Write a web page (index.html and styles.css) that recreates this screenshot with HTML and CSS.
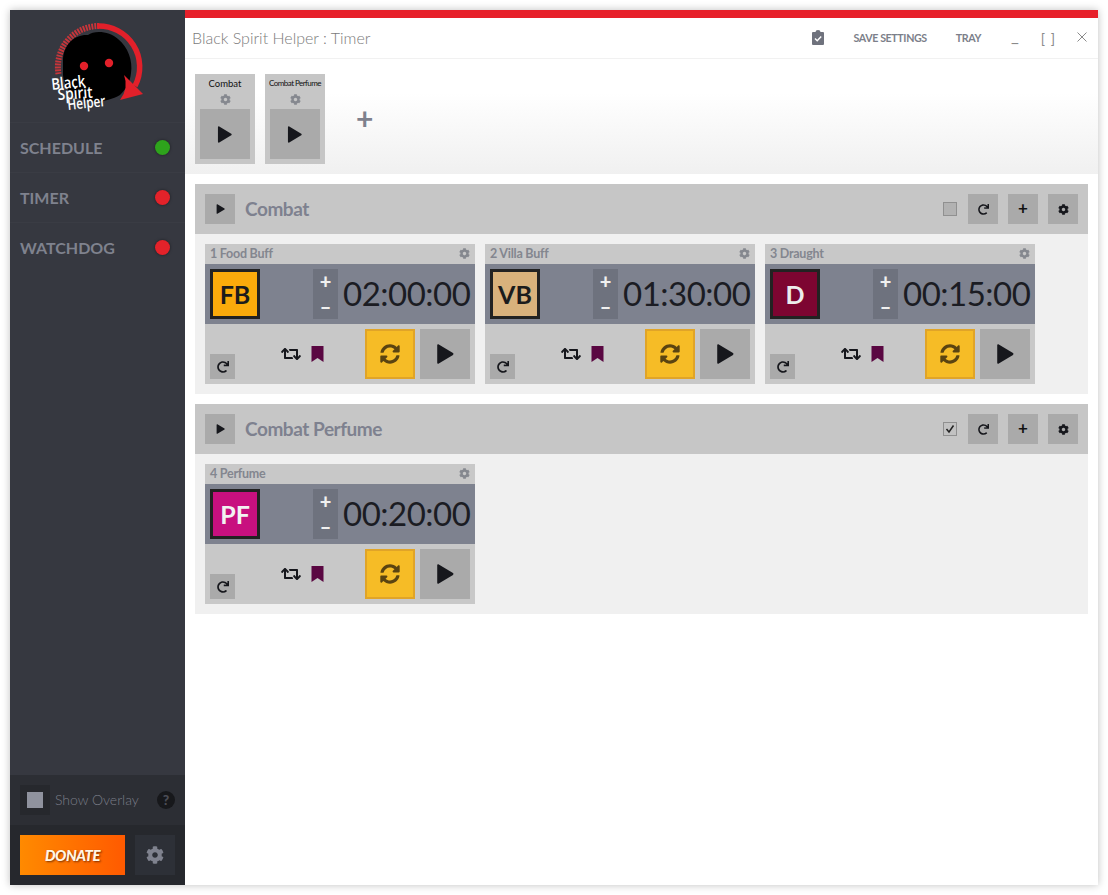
FILE: index.html
```html
<!DOCTYPE html>
<html lang="en">
<head>
  <meta charset="UTF-8">
  <title>Black Spirit Helper : Timer</title>
  <link rel="stylesheet" href="styles.css">
</head>
<body>
<svg class="defs" width="0" height="0">
  <symbol id="i-cog" viewBox="0 0 512 512"><path d="M487.4 315.7l-42.6-24.6c4.3-23.2 4.3-47 0-70.2l42.6-24.6c4.9-2.8 7.1-8.6 5.5-14-11.1-35.6-30-67.8-54.7-94.6-3.8-4.1-10-5.1-14.8-2.3L380.8 110c-17.9-15.4-38.5-27.3-60.8-35.1V25.8c0-5.6-3.9-10.5-9.4-11.7-36.7-8.2-74.3-7.8-109.2 0-5.5 1.2-9.4 6.1-9.4 11.7V75c-22.2 7.9-42.8 19.8-60.8 35.1L88.7 85.5c-4.9-2.8-11-1.9-14.8 2.3-24.7 26.7-43.6 58.9-54.7 94.6-1.7 5.4.6 11.2 5.5 14L67.3 221c-4.3 23.2-4.3 47 0 70.2l-42.6 24.6c-4.9 2.8-7.1 8.6-5.5 14 11.1 35.6 30 67.8 54.7 94.6 3.8 4.1 10 5.1 14.8 2.3l42.6-24.6c17.9 15.4 38.5 27.3 60.8 35.1v49.2c0 5.6 3.9 10.5 9.4 11.7 36.7 8.2 74.3 7.8 109.2 0 5.5-1.2 9.4-6.1 9.4-11.7v-49.2c22.2-7.9 42.8-19.8 60.8-35.1l42.6 24.6c4.9 2.8 11 1.9 14.8-2.3 24.7-26.7 43.6-58.9 54.7-94.6 1.5-5.5-.7-11.3-5.6-14.1zM256 336c-44.1 0-80-35.9-80-80s35.9-80 80-80 80 35.9 80 80-35.9 80-80 80z"/></symbol>
  <symbol id="i-redo" viewBox="0 0 512 512"><path d="M500.33 0h-47.41a12 12 0 0 0-12 12.57l4 82.76A247.42 247.42 0 0 0 256 8C119.34 8 7.9 119.53 8 256.19 8.1 393.07 119.1 504 256 504a247.1 247.1 0 0 0 166.18-63.91 12 12 0 0 0 .48-17.43l-34-34a12 12 0 0 0-16.38-.55A176 176 0 1 1 402.1 157.8l-101.53-4.87a12 12 0 0 0-12.57 12v47.41a12 12 0 0 0 12 12h200.33a12 12 0 0 0 12-12V12a12 12 0 0 0-12-12z"/></symbol>
  <symbol id="i-sync" viewBox="0 0 512 512"><path d="M370.72 133.28C339.458 104.008 298.888 87.962 255.848 88c-77.458.068-144.328 53.178-162.791 126.85-1.344 5.363-6.122 9.15-11.651 9.15H24.103c-7.498 0-13.194-6.807-11.807-14.176C33.933 94.924 134.813 8 256 8c66.448 0 126.791 26.136 171.315 68.685L463.03 40.97C478.149 25.851 504 36.559 504 57.941V192c0 13.255-10.745 24-24 24H345.941c-21.382 0-32.09-25.851-16.971-40.971l41.75-41.749zM32 296h134.059c21.382 0 32.09 25.851 16.971 40.971l-41.75 41.75c31.262 29.273 71.835 45.319 114.876 45.28 77.418-.07 144.315-53.144 162.787-126.849 1.344-5.363 6.122-9.15 11.651-9.15h57.304c7.498 0 13.194 6.807 11.807 14.176C478.067 417.076 377.187 504 256 504c-66.448 0-126.791-26.136-171.315-68.685L48.97 471.03C33.851 486.149 8 475.441 8 454.059V320c0-13.255 10.745-24 24-24z"/></symbol>
  <symbol id="i-retweet" viewBox="0 0 640 512"><path d="M629.657 343.598L528.971 444.284c-9.373 9.372-24.568 9.372-33.941 0L394.343 343.598c-9.373-9.373-9.373-24.569 0-33.941l10.823-10.823c9.562-9.562 25.133-9.34 34.419.492L480 342.118V160H292.451a24.005 24.005 0 0 1-16.971-7.029l-16-16C244.361 121.851 255.069 96 276.451 96H520c13.255 0 24 10.745 24 24v222.118l40.416-43.792c9.285-9.831 24.856-10.054 34.419-.492l10.823 10.823c9.372 9.372 9.372 24.569-.001 33.941zm-265.138 15.431A23.999 23.999 0 0 0 347.548 352H160V169.881l40.416 43.792c9.286 9.831 24.856 10.054 34.419.491l10.822-10.822c9.373-9.373 9.373-24.569 0-33.941L144.971 67.716c-9.373-9.373-24.569-9.373-33.941 0L10.343 168.402c-9.373 9.373-9.373 24.569 0 33.941l10.822 10.822c9.562 9.562 25.133 9.34 34.419-.491L96 169.881V392c0 13.255 10.745 24 24 24h243.549c21.382 0 32.09-25.851 16.971-40.971l-16.001-16z"/></symbol>
  <symbol id="i-play" viewBox="0 0 16 18"><path d="M1 1.2v15.6c0 .8.8 1.2 1.4.8l12.8-7.8c.6-.4.6-1.2 0-1.6L2.4.4C1.8 0 1 .4 1 1.2z"/></symbol>
  <symbol id="i-bookmark" viewBox="0 0 12 16"><path d="M0 0h12v16L6 12 0 16z"/></symbol>
</svg>

<div class="window">
  <aside class="sidebar">
    <div class="logo">
      <svg width="110" height="100" viewBox="0 0 110 100">
        <path d="M59 11 A41 41 0 0 0 18.5 59" fill="none" stroke="#c8353a" stroke-width="6" stroke-dasharray="1.8 1.1"/>
        <path d="M57 11 A41 41 0 0 1 95 71" fill="none" stroke="#e2202a" stroke-width="5.5"/>
        <path d="M23 44 C24 28 36 19 48 20 C54 15 70 16 78 24 C88 32 93 46 91 58 C90 68 86 74 80 80 C70 86 56 88 44 85 C32 84 24 72 23 60z" fill="#000"/>
        <circle cx="44" cy="51" r="4.2" fill="#e2202a"/>
        <circle cx="69" cy="48" r="4.2" fill="#e2202a"/>
        <path d="M84 60 L103 79 L80 85 Q89 73 84 60z" fill="#e2202a"/>
        <g class="logo-text">
          <text x="12" y="75" transform="rotate(-6 12 75)" font-size="16" textLength="34" lengthAdjust="spacingAndGlyphs">Black</text>
          <text x="18" y="85" transform="rotate(-4 18 85)" font-size="16" textLength="35" lengthAdjust="spacingAndGlyphs">Spirit</text>
          <text x="28" y="95" transform="rotate(-6 28 95)" font-size="15" textLength="38" lengthAdjust="spacingAndGlyphs">Helper</text>
        </g>
      </svg>
    </div>
    <nav class="nav">
      <a class="nav-item"><span>SCHEDULE</span><i class="dot dot-green"></i></a>
      <a class="nav-item"><span>TIMER</span><i class="dot dot-red"></i></a>
      <a class="nav-item"><span>WATCHDOG</span><i class="dot dot-red"></i></a>
    </nav>
    <div class="overlay-row">
      <span class="overlay-check"><i></i></span>
      <span class="overlay-label">Show Overlay</span>
      <span class="help">?</span>
    </div>
    <div class="donate-row">
      <button class="donate">DONATE</button>
      <button class="side-settings"><svg width="18" height="18"><use href="#i-cog"/></svg></button>
    </div>
  </aside>

  <main class="main">
    <div class="redbar"></div>
    <header class="titlebar">
      <span class="app-title">Black Spirit Helper : Timer</span>
      <svg class="clip" width="12" height="15" viewBox="0 0 12 15"><path d="M1 2h2.5a2.5 2 0 0 1 5 0H11a1 1 0 0 1 1 1v11a1 1 0 0 1-1 1H1a1 1 0 0 1-1-1V3a1 1 0 0 1 1-1z" fill="#6f727d"/><path d="M3 8.5l2.2 2.2L9.2 6.6" fill="none" stroke="#fff" stroke-width="1.5"/></svg>
      <span class="bar-link save">SAVE SETTINGS</span>
      <span class="bar-link tray">TRAY</span>
      <span class="win-btn min">_</span>
      <span class="win-btn max">[ ]</span>
      <svg class="win-close" width="10" height="10" viewBox="0 0 10 10"><path d="M.5.5l9 9M9.5.5l-9 9" stroke="#8a8a8a" stroke-width="1" fill="none"/></svg>
    </header>

    <section class="toolbar">
      <div class="tile">
        <div class="tile-name">Combat</div>
        <svg class="tile-cog" width="11" height="11"><use href="#i-cog"/></svg>
        <div class="tile-play"><svg width="15" height="17"><use href="#i-play"/></svg></div>
      </div>
      <div class="tile">
        <div class="tile-name small">Combat Perfume</div>
        <svg class="tile-cog" width="11" height="11"><use href="#i-cog"/></svg>
        <div class="tile-play"><svg width="15" height="17"><use href="#i-play"/></svg></div>
      </div>
      <div class="add-group">+</div>
    </section>

    <div class="content">
      <section class="group">
        <div class="group-head">
          <button class="sq"><svg width="9" height="10"><use href="#i-play"/></svg></button>
          <h3 class="group-title">Combat</h3>
          <span class="check"></span>
          <button class="sq"><svg width="11" height="11"><use href="#i-redo"/></svg></button>
          <button class="sq plus">+</button>
          <button class="sq"><svg width="11" height="11"><use href="#i-cog"/></svg></button>
        </div>
        <div class="group-body">
          <div class="card">
            <div class="card-title"><span>1 Food Buff</span><svg width="11" height="11"><use href="#i-cog"/></svg></div>
            <div class="card-main">
              <div class="badge badge-fb">FB</div>
              <div class="stepper"><span>+</span><span>–</span></div>
              <div class="time">02:00:00</div>
            </div>
            <div class="card-foot">
              <button class="mini"><svg width="12" height="12"><use href="#i-redo"/></svg></button>
              <div class="flags">
                <svg class="rt" width="20" height="16"><use href="#i-retweet"/></svg>
                <svg class="bm" width="13" height="16"><use href="#i-bookmark"/></svg>
              </div>
              <button class="loop"><svg width="20" height="20"><use href="#i-sync"/></svg></button>
              <button class="go"><svg width="18" height="20"><use href="#i-play"/></svg></button>
            </div>
          </div>
          <div class="card">
            <div class="card-title"><span>2 Villa Buff</span><svg width="11" height="11"><use href="#i-cog"/></svg></div>
            <div class="card-main">
              <div class="badge badge-vb">VB</div>
              <div class="stepper"><span>+</span><span>–</span></div>
              <div class="time">01:30:00</div>
            </div>
            <div class="card-foot">
              <button class="mini"><svg width="12" height="12"><use href="#i-redo"/></svg></button>
              <div class="flags">
                <svg class="rt" width="20" height="16"><use href="#i-retweet"/></svg>
                <svg class="bm" width="13" height="16"><use href="#i-bookmark"/></svg>
              </div>
              <button class="loop"><svg width="20" height="20"><use href="#i-sync"/></svg></button>
              <button class="go"><svg width="18" height="20"><use href="#i-play"/></svg></button>
            </div>
          </div>
          <div class="card">
            <div class="card-title"><span>3 Draught</span><svg width="11" height="11"><use href="#i-cog"/></svg></div>
            <div class="card-main">
              <div class="badge badge-d">D</div>
              <div class="stepper"><span>+</span><span>–</span></div>
              <div class="time">00:15:00</div>
            </div>
            <div class="card-foot">
              <button class="mini"><svg width="12" height="12"><use href="#i-redo"/></svg></button>
              <div class="flags">
                <svg class="rt" width="20" height="16"><use href="#i-retweet"/></svg>
                <svg class="bm" width="13" height="16"><use href="#i-bookmark"/></svg>
              </div>
              <button class="loop"><svg width="20" height="20"><use href="#i-sync"/></svg></button>
              <button class="go"><svg width="18" height="20"><use href="#i-play"/></svg></button>
            </div>
          </div>
        </div>
      </section>

      <section class="group">
        <div class="group-head">
          <button class="sq"><svg width="9" height="10"><use href="#i-play"/></svg></button>
          <h3 class="group-title">Combat Perfume</h3>
          <span class="check checked"><svg width="10" height="10" viewBox="0 0 10 10"><path d="M1.5 5l2.5 3L8.5 1.5" fill="none" stroke="#222" stroke-width="1.5"/></svg></span>
          <button class="sq"><svg width="11" height="11"><use href="#i-redo"/></svg></button>
          <button class="sq plus">+</button>
          <button class="sq"><svg width="11" height="11"><use href="#i-cog"/></svg></button>
        </div>
        <div class="group-body">
          <div class="card">
            <div class="card-title"><span>4 Perfume</span><svg width="11" height="11"><use href="#i-cog"/></svg></div>
            <div class="card-main">
              <div class="badge badge-pf">PF</div>
              <div class="stepper"><span>+</span><span>–</span></div>
              <div class="time">00:20:00</div>
            </div>
            <div class="card-foot">
              <button class="mini"><svg width="12" height="12"><use href="#i-redo"/></svg></button>
              <div class="flags">
                <svg class="rt" width="20" height="16"><use href="#i-retweet"/></svg>
                <svg class="bm" width="13" height="16"><use href="#i-bookmark"/></svg>
              </div>
              <button class="loop"><svg width="20" height="20"><use href="#i-sync"/></svg></button>
              <button class="go"><svg width="18" height="20"><use href="#i-play"/></svg></button>
            </div>
          </div>
        </div>
      </section>
    </div>
  </main>
</div>
</body>
</html>
```

FILE: styles.css
```css
* {
  box-sizing: border-box;
}
body {
  margin: 0;
  padding: 10px;
  height: 895px;
  overflow: hidden;
  background: #ffffff;
  font-family: Lato, "Liberation Sans", sans-serif;
}
button {
  border: none;
  padding: 0;
  font-family: inherit;
}
.defs {
  display: block;
  height: 0;
}
.window {
  display: flex;
  width: 1088px;
  height: 875px;
  box-shadow: 0 0 8px rgba(0,0,0,0.25);
}

/* sidebar */
.sidebar {
  width: 175px;
  display: flex;
  flex-direction: column;
  background: #363840;
}
.logo {
  height: 112px;
  padding: 5px 0 0 30px;
}
.logo svg {
  display: block;
}
.logo-text text {
  fill: #ffffff;
  font-family: "Open Sans", sans-serif;
  font-weight: 600;
}
.nav {
  flex: 1;
}
.nav-item {
  display: flex;
  align-items: center;
  justify-content: space-between;
  height: 50px;
  padding: 0 15px 0 10px;
  color: #7f828e;
  font-size: 16px;
  font-weight: 700;
  border-top: 1px solid #3a3c44;
}
.dot {
  width: 15px;
  height: 15px;
  border-radius: 50%;
  box-shadow: 0 0 3px rgba(0,0,0,0.5);
}
.dot-green {
  background: #2ea31c;
}
.dot-red {
  background: #e3222a;
}
.overlay-row {
  height: 50px;
  display: flex;
  align-items: center;
  padding: 0 10px 0;
  background: #2c2e34;
}
.overlay-check {
  width: 30px;
  height: 30px;
  display: flex;
  align-items: center;
  justify-content: center;
  background: #26282d;
}
.overlay-check i {
  width: 16px;
  height: 16px;
  background: #8f929e;
}
.overlay-label {
  flex: 1;
  margin: 0 0 2px 5px;
  color: #7a7d88;
  font-size: 14px;
  font-weight: 300;
}
.help {
  width: 18px;
  height: 18px;
  border-radius: 50%;
  background: #17181b;
  color: #4b4d55;
  font-size: 14px;
  font-weight: 900;
  line-height: 18px;
  text-align: center;
}
.donate-row {
  height: 60px;
  display: flex;
  gap: 10px;
  padding: 10px;
  background: #26282d;
}
.donate {
  width: 105px;
  height: 40px;
  background: linear-gradient(90deg, #ff8a00, #ff5a00);
  color: #fff6e6;
  font-size: 15px;
  font-weight: 900;
  font-style: italic;
  letter-spacing: -0.5px;
  text-shadow: 1px 1px 2px rgba(90,30,0,0.8);
}
.side-settings {
  width: 40px;
  height: 40px;
  display: flex;
  align-items: center;
  justify-content: center;
  background: #2d3037;
  fill: #7f828e;
}

/* main column */
.main {
  flex: 1;
  display: flex;
  flex-direction: column;
  background: #ffffff;
}
.redbar {
  height: 8px;
  background: #e7202a;
}
.titlebar {
  height: 41px;
  display: flex;
  align-items: center;
  padding: 0 11px 2px 7px;
  border-bottom: 1px solid #f1f1f1;
}
.app-title {
  flex: 1;
  color: #7b7b7b;
  font-size: 16px;
  font-weight: 300;
}
.clip {
  margin-right: 29px;
}
.bar-link {
  color: #7c7f8a;
  font-size: 10.7px;
  font-weight: 700;
  letter-spacing: -0.4px;
}
.tray {
  margin-left: 29px;
}
.win-btn {
  color: #8a8a8a;
}
.min {
  margin-left: 30px;
  margin-bottom: 4px;
  font-size: 17px;
}
.max {
  margin-left: 22px;
  font-size: 14px;
  word-spacing: 2px;
  padding-top: 2px;
}
.win-close {
  margin-left: 22px;
}

.toolbar {
  height: 115px;
  display: flex;
  align-items: flex-start;
  gap: 10px;
  padding: 15px 10px 0;
  background: linear-gradient(#ffffff 30%, #f0f0f0);
}
.tile {
  width: 60px;
  height: 90px;
  padding: 0 5px;
  display: flex;
  flex-direction: column;
  align-items: center;
  background: #c6c6c6;
}
.tile-name {
  height: 18px;
  padding-top: 4px;
  color: #111111;
  font-size: 9.5px;
  line-height: 12px;
  white-space: nowrap;
}
.tile-name.small {
  padding-top: 3px;
  font-size: 8px;
  letter-spacing: -0.55px;
}
.tile-cog {
  fill: #85888f;
  margin-top: 2px;
}
.tile-play {
  width: 50px;
  height: 50px;
  margin-top: 4px;
  padding-right: 2px;
  display: flex;
  align-items: center;
  justify-content: center;
  background: #aaaaaa;
  fill: #16171c;
}
.add-group {
  margin: 29px 0 0 21px;
  color: #7e818d;
  font-size: 30px;
  font-weight: 700;
  line-height: 30px;
}

/* groups */
.content {
  flex: 1;
  padding: 10px;
}
.group {
  margin-bottom: 10px;
}
.group-head {
  height: 50px;
  display: flex;
  align-items: center;
  gap: 10px;
  padding: 0 10px;
  background: #c6c6c6;
}
.group-title {
  flex: 1;
  margin: 0 0 2px;
  color: #7e818f;
  font-size: 19px;
  font-weight: 700;
  letter-spacing: -0.45px;
}
.sq {
  width: 30px;
  height: 30px;
  display: flex;
  align-items: center;
  justify-content: center;
  background: #aaaaaa;
  color: #111111;
  fill: #16171c;
}
.plus {
  padding-bottom: 3px;
  font-size: 17px;
  font-weight: 700;
}
.check {
  width: 14px;
  height: 14px;
  margin-right: 1px;
  display: flex;
  align-items: center;
  justify-content: center;
  background: #b2b2b2;
  border: 1px solid #909090;
}
.check.checked {
  background: #c2c2c2;
}
.group-body {
  height: 160px;
  display: flex;
  gap: 10px;
  padding: 10px;
  background: #f0f0f0;
}

/* timer card */
.card {
  width: 270px;
  height: 140px;
  background: #c8c8c8;
}
.card-title {
  height: 20px;
  display: flex;
  align-items: center;
  justify-content: space-between;
  padding: 0 5px 2px;
  color: #83868f;
  font-size: 12.5px;
  font-weight: 700;
  letter-spacing: -0.25px;
  fill: #85888f;
}
.card-main {
  height: 60px;
  display: flex;
  align-items: center;
  padding: 0 5px;
  background: #7e828f;
}
.badge {
  flex-shrink: 0;
  width: 50px;
  height: 50px;
  display: flex;
  align-items: center;
  justify-content: center;
  padding-bottom: 1px;
  border: 3px solid #222222;
  font-size: 25px;
  font-weight: 700;
  color: #1c1c1c;
}
.badge-fb {
  background: #fbab0b;
}
.badge-vb {
  background: #d9b27c;
}
.badge-d {
  background: #7d0531;
  color: #ececec;
}
.badge-pf {
  background: #c8107f;
  color: #f2f2f2;
}
.stepper {
  flex-shrink: 0;
  width: 25px;
  height: 50px;
  margin-left: 53px;
  display: flex;
  flex-direction: column;
  align-items: center;
  padding: 0;
  background: #6e727e;
  color: #f0f0f0;
  font-size: 20px;
  font-weight: 900;
  line-height: 25px;
}
.time {
  margin: 0 0 3px 5px;
  color: #1b1c23;
  font-size: 33px;
  letter-spacing: -0.5px;
  white-space: nowrap;
}
.card-foot {
  height: 60px;
  display: flex;
  align-items: flex-end;
  padding: 5px;
}
.mini {
  width: 25px;
  height: 25px;
  display: flex;
  align-items: center;
  justify-content: center;
  background: #aaaaaa;
  fill: #16171c;
}
.flags {
  width: 130px;
  height: 50px;
  padding-left: 46px;
  display: flex;
  align-items: center;
  gap: 10px;
}
.rt {
  fill: #16171c;
}
.bm {
  fill: #5a0742;
}
.loop {
  width: 50px;
  height: 50px;
  display: flex;
  align-items: center;
  justify-content: center;
  background: #f6bc26;
  border: 2px solid #e0a428;
  fill: #5b4411;
}
.go {
  width: 50px;
  height: 50px;
  margin-left: 5px;
  display: flex;
  align-items: center;
  justify-content: center;
  background: #aaaaaa;
  fill: #16171c;
}
```
